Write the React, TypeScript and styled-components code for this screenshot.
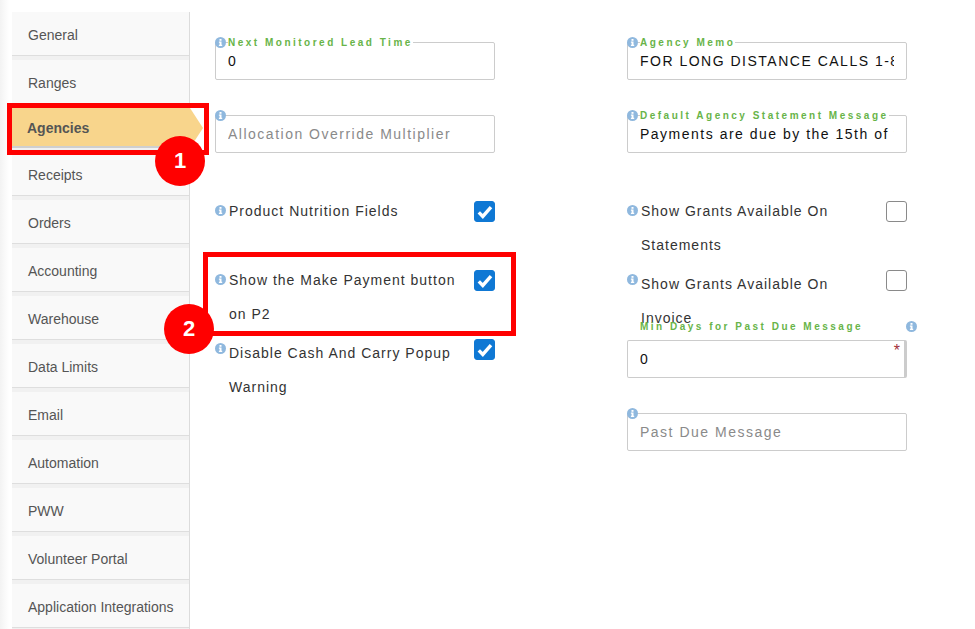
import { FC } from "react"
import styled, { createGlobalStyle } from "styled-components"

const navItems = [
  "General",
  "Ranges",
  "Agencies",
  "Receipts",
  "Orders",
  "Accounting",
  "Warehouse",
  "Data Limits",
  "Email",
  "Automation",
  "PWW",
  "Volunteer Portal",
  "Application Integrations",
]

const InfoIcon: FC = () => (
  <svg width="11" height="11" viewBox="0 0 11 11">
    <circle cx="5.5" cy="5.5" r="5.5" fill="#8fb8de" />
    <rect x="4.5" y="2" width="2" height="1.8" fill="#fff" />
    <path d="M3.9 4.6h2.6v3.2h.7v1.1H3.9V7.8h.7V5.7h-.7z" fill="#fff" />
  </svg>
)

const TextField: FC<{
  label?: string
  value?: string
  placeholder?: string
  detached?: boolean
}> = ({ label, value, placeholder, detached }) => (
  <Field $detached={detached}>
    <FieldIcon $detached={detached}>
      <InfoIcon />
    </FieldIcon>
    {label && <FieldLabel $detached={detached}>{label}</FieldLabel>}
    <FieldInput readOnly value={value ?? ""} placeholder={placeholder} />
    {detached && <Required>*</Required>}
  </Field>
)

const CheckRow: FC<{
  label: string
  checked?: boolean
  low?: boolean
}> = ({ label, checked, low }) => (
  <Row>
    <RowText $low={low}>
      <RowIcon $low={low}>
        <InfoIcon />
      </RowIcon>
      {label}
    </RowText>
    <CheckBox $checked={checked}>
      {checked && (
        <svg width="16" height="14" viewBox="0 0 16 14">
          <path
            d="M1.8 7.4 5.8 11.4 14 2.2"
            fill="none"
            stroke="#fff"
            strokeWidth="3.4"
          />
        </svg>
      )}
    </CheckBox>
  </Row>
)

export default function App() {
  return (
    <Page>
      <GlobalStyle />
      <Sidebar>
        {navItems.map((item) =>
          item === "Agencies" ? (
            <ActiveNavItem key={item}>{item}</ActiveNavItem>
          ) : (
            <NavItem key={item}>{item}</NavItem>
          ),
        )}
      </Sidebar>
      <Form>
        <Column>
          <TextField label="Next Monitored Lead Time" value="0" />
          <TextField placeholder="Allocation Override Multiplier" />
          <CheckRow label="Product Nutrition Fields" checked />
          <CheckRow label="Show the Make Payment button on P2" checked />
          <CheckRow label="Disable Cash And Carry Popup Warning" checked low />
        </Column>
        <Column>
          <TextField
            label="Agency Memo"
            value="FOR LONG DISTANCE CALLS 1-800-555-0100"
          />
          <TextField
            label="Default Agency Statement Message"
            value="Payments are due by the 15th of the month"
          />
          <CheckRow label="Show Grants Available On Statements" />
          <CheckRow label="Show Grants Available On Invoice" low />
          <Spacer />
          <TextField label="Min Days for Past Due Message" value="0" detached />
          <TextField placeholder="Past Due Message" />
        </Column>
      </Form>
      <Callout $left={7} $top={103} $width={202} $height={52} />
      <Badge $left={155} $top={136}>1</Badge>
      <Callout $left={203} $top={252} $width={313} $height={84} />
      <Badge $left={164} $top={304}>2</Badge>
    </Page>
  )
}

const GlobalStyle = createGlobalStyle`
  html, body {
    margin: 0;
    padding: 0;
    background: #fff;
  }
`

const Page = styled.div`
  position: relative;
  display: flex;
  align-items: flex-start;
  width: 975px;
  height: 629px;
  padding: 12px 0 0 12px;
  box-sizing: border-box;
  overflow: hidden;
  font-family: "Liberation Sans", Arial, sans-serif;
  background: linear-gradient(90deg, #f3f3f3, #fff 9px);
`

const Sidebar = styled.nav`
  display: flex;
  flex-direction: column;
  flex: none;
  gap: 4px;
  width: 178px;
  min-height: 640px;
  box-sizing: border-box;
  background: #f1f1f1;
  border-right: 1px solid #dcdcdc;
`

const NavItem = styled.div`
  flex: none;
  height: 44px;
  box-sizing: border-box;
  padding: 15px 0 0 16px;
  font-size: 14px;
  line-height: 16px;
  color: #555;
  background: #f9f9f9;
  border-bottom: 1px solid #dedede;
`

const ActiveNavItem = styled(NavItem)`
  position: relative;
  z-index: 1;
  width: 191px;
  height: 40px;
  padding: 12px 0 0 15px;
  font-weight: 700;
  background: #f8d58c;
  border-bottom: 2px solid #cfcfcf;
  clip-path: polygon(0 0, 178px 0, 100% 50%, 178px 100%, 0 100%);
`

const Form = styled.div`
  display: grid;
  grid-template-columns: 280px 280px;
  column-gap: 132px;
  margin: 30px 0 0 25px;
`

const Column = styled.div`
  display: flex;
  flex-direction: column;
`

const Field = styled.div<{ $detached?: boolean }>`
  position: relative;
  flex: none;
  width: 280px;
  height: 38px;
  margin-bottom: 35px;
  box-sizing: border-box;
  background: #fff;
  border: 1px solid #ccc;
  border-right: ${({ $detached }) =>
    $detached ? "3px solid #ccc" : "1px solid #ccc"};
  border-radius: 2px;
`

const FieldIcon = styled.span<{ $detached?: boolean }>`
  position: absolute;
  z-index: 1;
  display: flex;
  top: ${({ $detached }) => ($detached ? "-20px" : "-6px")};
  left: ${({ $detached }) => ($detached ? "278px" : "-1px")};
`

const FieldLabel = styled.label<{ $detached?: boolean }>`
  position: absolute;
  z-index: 1;
  top: ${({ $detached }) => ($detached ? "-20px" : "-6px")};
  left: 12px;
  font-size: 10px;
  line-height: 12px;
  font-weight: 700;
  letter-spacing: 2.5px;
  white-space: nowrap;
  color: #68b449;
  background: ${({ $detached }) => ($detached ? "transparent" : "#fff")};
`

const FieldInput = styled.input`
  display: block;
  width: 100%;
  height: 100%;
  box-sizing: border-box;
  padding: 0 12px;
  border: none;
  outline: none;
  background: transparent;
  font-family: inherit;
  font-size: 14px;
  letter-spacing: 1.5px;
  color: #111;

  &::placeholder {
    color: #8a8a8a;
    opacity: 1;
  }
`

const Required = styled.span`
  position: absolute;
  top: 2px;
  right: 4px;
  font-size: 16px;
  line-height: 16px;
  color: #a3303a;
`

const Row = styled.div`
  position: relative;
  flex: none;
  display: flex;
  justify-content: space-between;
  align-items: flex-start;
  height: 69px;
`

const RowText = styled.div<{ $low?: boolean }>`
  position: relative;
  width: 240px;
  margin-top: ${({ $low }) => ($low ? "10px" : "6px")};
  padding-left: 14px;
  font-size: 14px;
  line-height: 34px;
  letter-spacing: 1px;
  color: #333;
`

const RowIcon = styled.span<{ $low?: boolean }>`
  position: absolute;
  display: flex;
  top: ${({ $low }) => ($low ? "7px" : "11px")};
  left: 0;
`

const CheckBox = styled.span<{ $checked?: boolean }>`
  display: flex;
  align-items: center;
  justify-content: center;
  flex: none;
  width: 21px;
  height: 21px;
  margin-top: 13px;
  box-sizing: border-box;
  border-radius: 3px;
  background: ${({ $checked }) => ($checked ? "#0f78d4" : "#fff")};
  border: 1px solid ${({ $checked }) => ($checked ? "#0f78d4" : "#8a8a8a")};
`

const Spacer = styled.div`
  flex: none;
  height: 14px;
`

const Callout = styled.div<{
  $left: number
  $top: number
  $width: number
  $height: number
}>`
  position: absolute;
  z-index: 2;
  left: ${({ $left }) => $left}px;
  top: ${({ $top }) => $top}px;
  width: ${({ $width }) => $width}px;
  height: ${({ $height }) => $height}px;
  box-sizing: border-box;
  border: 5px solid #ff0000;
`

const Badge = styled.div<{ $left: number; $top: number }>`
  position: absolute;
  z-index: 3;
  left: ${({ $left }) => $left}px;
  top: ${({ $top }) => $top}px;
  display: flex;
  align-items: center;
  justify-content: center;
  width: 50px;
  height: 50px;
  border-radius: 50%;
  background: #ff0000;
  color: #fff;
  font-size: 22px;
  font-weight: 700;
`
